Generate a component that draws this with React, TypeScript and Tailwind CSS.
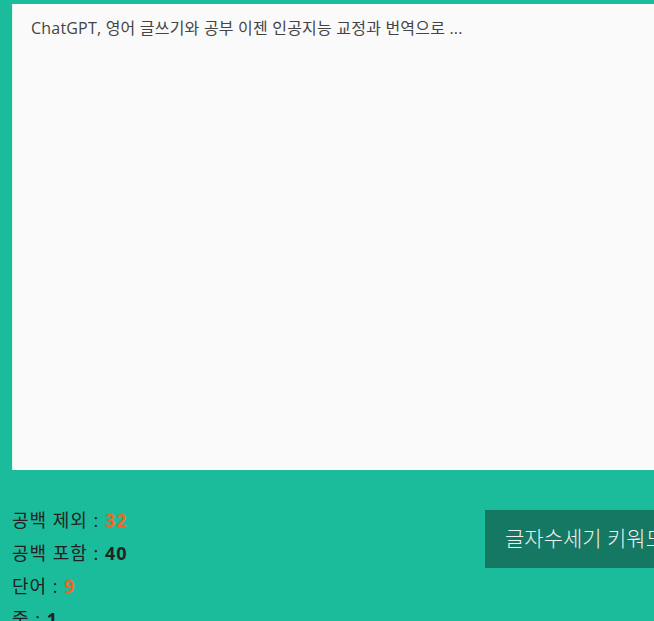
import { useState } from 'react';

export default function App() {
  const [text, setText] = useState('ChatGPT, 영어 글쓰기와 공부 이젠 인공지능 교정과 번역으로 ...');

  const noSpace = text.replace(/\s/g, '').length;
  const withSpace = text.length;
  const words = text.trim() ? text.trim().split(/\s+/).length : 0;
  const lines = text ? text.split('\n').length : 0;

  return (
    <div
      className="w-[654px] h-[621px] overflow-hidden bg-[#1abc9c]"
      style={{ fontFamily: '"Open Sans", "Noto Sans CJK KR", sans-serif' }}
    >
      <div className="w-[720px] pt-1 pl-3">
        <textarea
          value={text}
          onChange={(e) => setText(e.target.value)}
          className="block w-full h-[466px] resize-none bg-[#fafafa] border-l border-[#d9f2ec] px-[18px] py-[12px] text-[16px] leading-[1.5] tracking-[0.2px] text-[#444] outline-none"
        />

        {/* Counts + action */}
        <div className="flex items-start pt-[34px]">
          <div className="w-[473px] shrink-0 text-[18px] text-[#222] leading-[33px] tracking-[1px]">
            <p>
              공백 제외 : <b className="text-[#f26522]">{noSpace}</b>
            </p>
            <p>
              공백 포함 : <b>{withSpace}</b>
            </p>
            <p>
              단어 : <b className="text-[#f26522]">{words}</b>
            </p>
            <p>
              줄 : <b>{lines}</b>
            </p>
          </div>
          <button className="shrink-0 mt-[6px] h-[58px] px-5 bg-[#157862] text-[#f0f0f0] text-[21px] font-light whitespace-nowrap">
            글자수세기 키워드 검색
          </button>
        </div>
      </div>
    </div>
  );
}
